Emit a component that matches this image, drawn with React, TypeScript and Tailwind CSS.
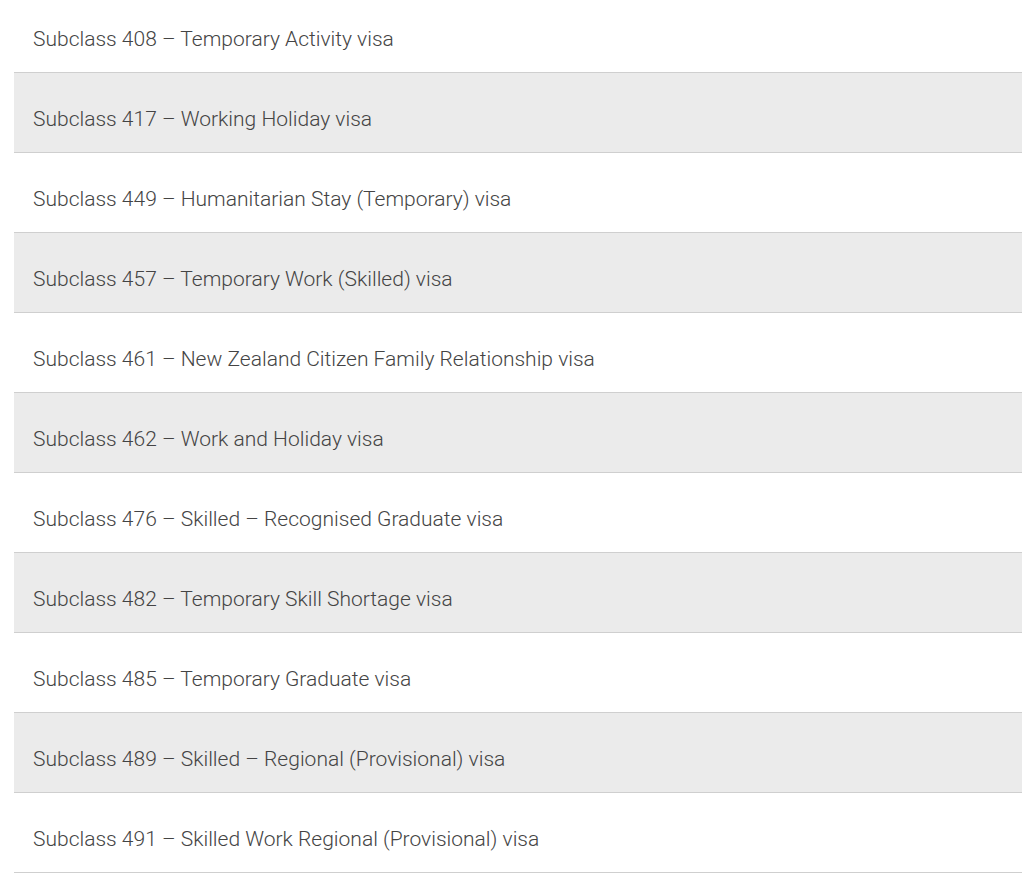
const visas = [
  "Subclass 408 – Temporary Activity visa",
  "Subclass 417 – Working Holiday visa",
  "Subclass 449 – Humanitarian Stay (Temporary) visa",
  "Subclass 457 – Temporary Work (Skilled) visa",
  "Subclass 461 – New Zealand Citizen Family Relationship visa",
  "Subclass 462 – Work and Holiday visa",
  "Subclass 476 – Skilled – Recognised Graduate visa",
  "Subclass 482 – Temporary Skill Shortage visa",
  "Subclass 485 – Temporary Graduate visa",
  "Subclass 489 – Skilled – Regional (Provisional) visa",
  "Subclass 491 – Skilled Work Regional (Provisional) visa",
]

export default function App() {
  return (
    <div className="bg-white min-h-[876px] overflow-hidden font-['Roboto',sans-serif]">
      <ul className="ml-[14px] w-[1008px] -mt-[7px]">
        {visas.map((v, i) => (
          <li
            key={v}
            className={
              "pl-[19px] pt-[31px] pb-[18px] leading-[30px] text-[21px] font-light text-[#444] border-b border-[#cfcfcf] " +
              (i % 2 === 1 ? "bg-[#ebebeb]" : "bg-white")
            }
          >
            {v}
          </li>
        ))}
      </ul>
    </div>
  )
}
